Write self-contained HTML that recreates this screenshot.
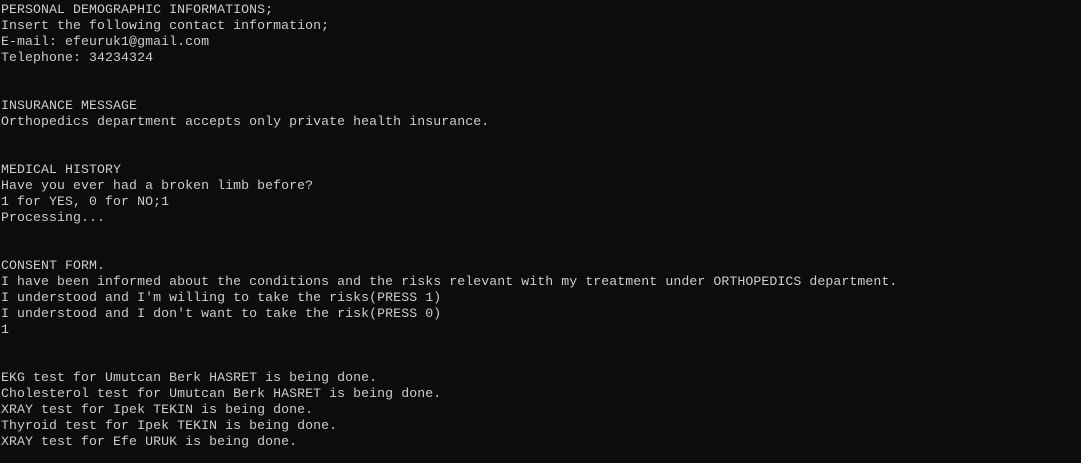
<!DOCTYPE html>
<html><head><meta charset="utf-8"><style>
html,body{margin:0;padding:0;background:#0c0c0c;width:1081px;height:463px;overflow:hidden}
pre{margin:0;padding:2px 0 0 1px;font-family:"Liberation Mono",monospace;font-size:13.2px;letter-spacing:0.09px;line-height:16px;color:#cccccc;white-space:pre}
</style></head><body><pre>PERSONAL DEMOGRAPHIC INFORMATIONS;
Insert the following contact information;
E-mail: efeuruk1@gmail.com
Telephone: 34234324


INSURANCE MESSAGE
Orthopedics department accepts only private health insurance.


MEDICAL HISTORY
Have you ever had a broken limb before?
1 for YES, 0 for NO;1
Processing...


CONSENT FORM.
I have been informed about the conditions and the risks relevant with my treatment under ORTHOPEDICS department.
I understood and I'm willing to take the risks(PRESS 1)
I understood and I don't want to take the risk(PRESS 0)
1


EKG test for Umutcan Berk HASRET is being done.
Cholesterol test for Umutcan Berk HASRET is being done.
XRAY test for Ipek TEKIN is being done.
Thyroid test for Ipek TEKIN is being done.
XRAY test for Efe URUK is being done.</pre></body></html>
